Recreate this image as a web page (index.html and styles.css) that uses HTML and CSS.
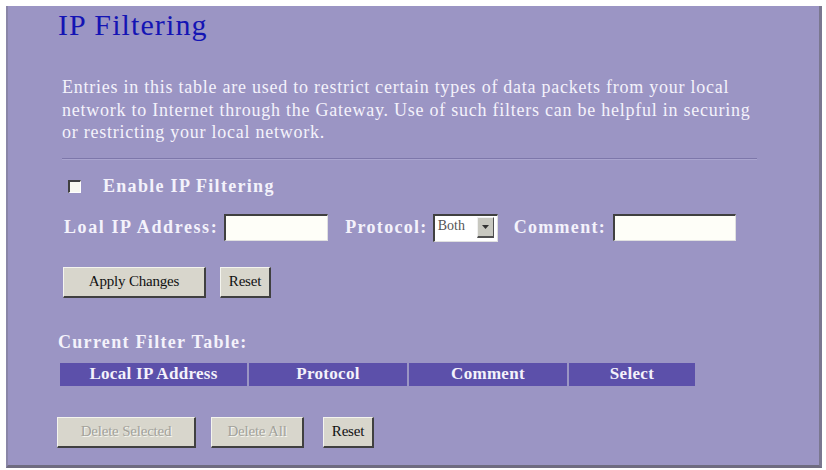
FILE: index.html
```html
<!DOCTYPE html>
<html>
<head>
<meta charset="utf-8">
<link rel="stylesheet" href="styles.css">
</head>
<body>
<div class="frame">
  <h1 class="title">IP Filtering</h1>
  <p class="intro">Entries in this table are used to restrict certain types of data packets from your local network to Internet through the Gateway. Use of such filters can be helpful in securing or restricting your local network.</p>
  <hr class="rule">
  <div class="enable-row">
    <span class="checkbox"></span>
    <span class="label">Enable IP Filtering</span>
  </div>
  <div class="field-row">
    <span class="label">Loal IP Address:</span>
    <span class="input ip-input"></span>
    <span class="label proto-label">Protocol:</span>
    <span class="select"><span class="select-text">Both</span><span class="select-btn"><svg width="9" height="6" viewBox="0 0 9 6"><path d="M1 1h7L4.5 5z" fill="#333"/></svg></span></span>
    <span class="label comment-label">Comment:</span>
    <span class="input comment-input"></span>
  </div>
  <div class="btn-row">
    <span class="btn apply">Apply Changes</span>
    <span class="btn reset">Reset</span>
  </div>
  <div class="table-title label">Current Filter Table:</div>
  <div class="table-head">
    <span class="th c1">Local IP Address</span>
    <span class="th c2">Protocol</span>
    <span class="th c3">Comment</span>
    <span class="th c4">Select</span>
  </div>
  <div class="btn-row bottom-row">
    <span class="btn disabled del-sel">Delete Selected</span>
    <span class="btn disabled del-all">Delete All</span>
    <span class="btn reset2">Reset</span>
  </div>
</div>
</body>
</html>
```

FILE: styles.css
```css
html, body {
  margin: 0;
  padding: 0;
  background: #ffffff;
}
body {
  font-family: "Liberation Serif", "DejaVu Serif", serif;
  width: 826px;
  height: 470px;
  overflow: hidden;
}
.frame {
  box-sizing: border-box;
  margin: 6px 0 0 6px;
  width: 816px;
  height: 462px;
  background: #9b95c4;
  border-left: 2px solid #8a86a8;
  border-right: 3px solid #7a7790;
  border-bottom: 3px solid #6f6c80;
  padding: 0 0 0 50px;
}
.title {
  margin: 0;
  padding-top: 2px;
  font-size: 30px;
  font-weight: normal;
  color: #1414b4;
  line-height: 34px;
  letter-spacing: 1.1px;
}
.intro {
  margin: 34px 0 0 4px;
  width: 700px;
  color: #f4f2fb;
  font-size: 18px;
  line-height: 22.5px;
  letter-spacing: 0.75px;
}
.rule {
  margin: 14px 0 0 4px;
  width: 695px;
  border: 0;
  border-top: 1px solid #7d77aa;
  border-bottom: 1px solid #aaa5cf;
  height: 0;
}
.label {
  color: #f4f2fb;
  font-weight: bold;
  font-size: 18px;
  letter-spacing: 1.6px;
}
.enable-row {
  display: flex;
  align-items: center;
  margin: 16px 0 0 10px;
  height: 22px;
}
.enable-row .label {
  letter-spacing: 1.3px;
}
.checkbox {
  width: 10px;
  height: 10px;
  background: #f8f8f0;
  border-top: 2px solid #404040;
  border-left: 2px solid #404040;
  border-right: 1px solid #ffffff;
  border-bottom: 1px solid #ffffff;
  margin-right: 22px;
}
.field-row {
  display: flex;
  align-items: center;
  margin: 16px 0 0 6px;
  height: 28px;
}
.input {
  box-sizing: border-box;
  height: 27px;
  background: #fefef8;
  border-top: 2px solid #404040;
  border-left: 2px solid #404040;
  border-right: 1px solid #e0e0e0;
  border-bottom: 1px solid #e0e0e0;
}
.ip-input {
  width: 104px;
  margin-left: 6px;
}
.field-row .proto-label {
  margin-left: 17px;
  letter-spacing: 1.3px;
}
.select {
  box-sizing: border-box;
  display: flex;
  align-items: flex-start;
  width: 65px;
  height: 28px;
  margin-left: 5px;
  background: #ffffff;
  border-top: 2px solid #404040;
  border-left: 2px solid #404040;
  border-right: 1px solid #e0e0e0;
  border-bottom: 1px solid #e0e0e0;
}
.select-text {
  flex: 1;
  font-size: 14px;
  color: #555;
  padding: 2px 0 0 3px;
  line-height: 16px;
}
.select-btn {
  box-sizing: border-box;
  width: 17px;
  height: 21px;
  margin-top: 1px;
  margin-right: 3px;
  background: #c8c8c0;
  border-top: 1px solid #f0f0f0;
  border-left: 1px solid #f0f0f0;
  border-right: 1px solid #505050;
  border-bottom: 2px solid #505050;
  display: flex;
  align-items: center;
  justify-content: center;
}
.field-row .comment-label {
  margin-left: 16px;
  letter-spacing: 1.3px;
}
.comment-input {
  width: 123px;
  margin-left: 7px;
}
.btn-row {
  display: flex;
  align-items: center;
  margin: 25px 0 0 5px;
  height: 31px;
}
.btn {
  box-sizing: border-box;
  display: flex;
  align-items: center;
  justify-content: center;
  height: 31px;
  background: #d8d6cc;
  border-top: 1px solid #f4f4ee;
  border-left: 1px solid #f4f4ee;
  border-right: 2px solid #404040;
  border-bottom: 2px solid #404040;
  font-size: 15px;
  color: #111;
  letter-spacing: -0.2px;
}
.apply {
  width: 143px;
}
.reset {
  width: 51px;
  margin-left: 14px;
}
.table-title {
  margin: 33px 0 0 0;
  line-height: 22px;
  letter-spacing: 1.3px;
}
.table-head {
  display: flex;
  gap: 2px;
  margin: 10px 0 0 2px;
  height: 23px;
}
.th {
  display: flex;
  align-items: center;
  justify-content: center;
  background: #5c50aa;
  color: #f4f2fb;
  font-weight: bold;
  font-size: 17px;
  letter-spacing: 0.3px;
}
.c1 { width: 187px; }
.c2 { width: 158px; }
.c3 { width: 158px; }
.c4 { width: 126px; }
.bottom-row {
  margin: 31px 0 0 -1px;
}
.disabled {
  color: #a3a29b;
  text-shadow: 1px 1px 0 #f6f6f2;
}
.del-sel {
  width: 139px;
}
.del-all {
  width: 93px;
  margin-left: 15px;
}
.reset2 {
  width: 51px;
  margin-left: 19px;
}
```
